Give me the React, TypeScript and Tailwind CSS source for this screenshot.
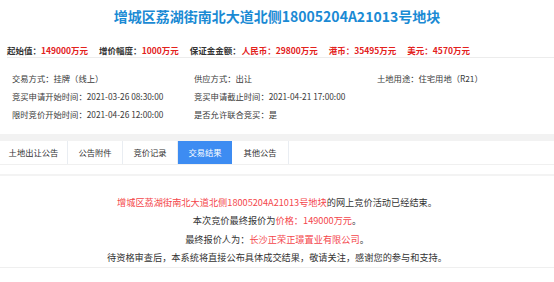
import React from 'react';

const FONT = "font-['Microsoft_YaHei','Noto_Sans_CJK_SC','Noto_Sans',sans-serif]";

const tabs = ['土地出让公告', '公告附件', '竞价记录', '交易结果', '其他公告'];

const Price: React.FC<{ label: string; value: string }> = ({ label, value }) => (
  <span className="mr-[11px] whitespace-nowrap">
    <span className="text-[#333]">{label}</span>
    <span className="text-[#e3211c]">{value}</span>
  </span>
);

const App: React.FC = () => {
  return (
    <div className={`w-[554px] h-[282px] overflow-hidden bg-white ${FONT}`}>
      <div className="h-[32px] flex items-center justify-center">
        <h1 className="text-[14px] font-bold text-[#1a8ad4]">
          增城区荔湖街南北大道北侧18005204A21013号地块
        </h1>
      </div>

      <div className="mt-[12px] ml-[7px] h-[14px] border-b border-[#ececec] text-[8.5px] leading-[12px] font-bold flex">
        <Price label="起始值：" value="149000万元" />
        <Price label="增价幅度：" value="1000万元" />
        <span className="text-[#333] mr-[1px]">保证金金额：</span>
        <Price label="" value="人民币：29800万元" />
        <Price label="" value="港币：35495万元" />
        <Price label="" value="美元：4570万元" />
      </div>

      <div className="mt-[11px] pl-[12px] grid grid-cols-[182px_183px_1fr] text-[8.3px] leading-[18px] text-[#3a3a3a]">
        <div>交易方式：挂牌（线上）</div>
        <div>供应方式：出让</div>
        <div>土地用途：住宅用地（R21）</div>
        <div>竞买申请开始时间：2021-03-26 08:30:00</div>
        <div>竞买申请截止时间：2021-04-21 17:00:00</div>
        <div />
        <div>限时竞价开始时间：2021-04-26 12:00:00</div>
        <div>是否允许联合竞买：是</div>
        <div />
      </div>

      <div className="mt-[11px] h-[7px] bg-[#f2f2f2]" />
      <div className="flex h-[24px] border-b border-[#f0f0f0] text-[8.3px] text-[#333]">
        {tabs.map((t, i) => (
          <div
            key={t}
            className={
              i === 3
                ? 'w-[54px] flex items-center justify-center bg-[#3d8cf2] text-white'
                : `flex items-center justify-center border-r border-[#e9edf2] ${
                    i === 0 ? 'w-[68px]' : i === 4 ? 'w-[57px]' : 'w-[55px]'
                  }`
            }
          >
            {t}
          </div>
        ))}
      </div>

      <div className="mt-[9px] h-[2px] bg-[#f3f3f3]" />
      <div className="pt-[17px] pb-[1px] border-b border-[#efefef] text-center text-[9.2px] leading-[18.3px] text-[#333]">
        <p>
          <span className="text-[#f4464b]">增城区荔湖街南北大道北侧18005204A21013号地块</span>
          的网上竞价活动已经结束。
        </p>
        <p>
          本次竞价最终报价为<span className="text-[#f4464b]">价格：149000万元</span>。
        </p>
        <p>
          最终报价人为：<span className="text-[#f4464b]">长沙正荣正璟置业有限公司</span>。
        </p>
        <p>待资格审查后，本系统将直接公布具体成交结果，敬请关注，感谢您的参与和支持。</p>
      </div>
    </div>
  );
};

export default App;
